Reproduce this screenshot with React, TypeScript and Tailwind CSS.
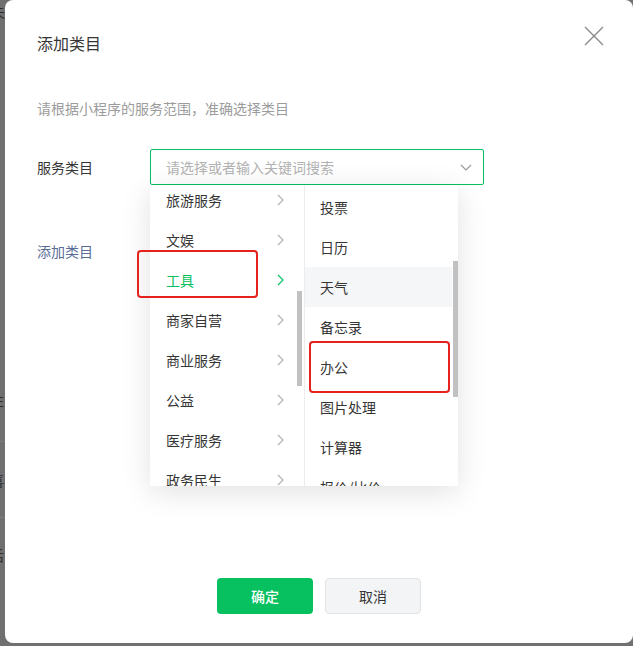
import React from "react";

const font = { fontFamily: '"Noto Sans CJK SC", "Noto Sans", sans-serif' };

function ChevronRight({ color = "#b2b2b2" }: { color?: string }) {
  return (
    <svg width="7" height="12" viewBox="0 0 7 12" fill="none">
      <path d="M1 1l5 5-5 5" stroke={color} strokeWidth="1.2" />
    </svg>
  );
}

const leftItems = ["旅游服务", "文娱", "工具", "商家自营", "商业服务", "公益", "医疗服务", "政务民生"];
const rightItems = ["投票", "日历", "天气", "备忘录", "办公", "图片处理", "计算器", "报价/比价"];

export default function App() {
  return (
    <div className="flex h-[646px] w-[633px] overflow-hidden bg-[#707070]" style={font}>
      <div className="relative w-[5px] shrink-0 overflow-hidden text-[14px] text-[#2e2e2e]">
        <div className="absolute left-[-9px] top-[1px]">失</div>
        <div className="absolute left-[-10px] top-[390px]">左</div>
        <div className="absolute left-[-10px] top-[470px]">喜</div>
        <div className="absolute left-[-10px] top-[545px]">后</div>
        <div className="absolute left-0 top-[441px] h-px w-[5px] bg-[#7d7d7d]" />
        <div className="absolute left-0 top-[517px] h-px w-[5px] bg-[#7d7d7d]" />
      </div>
      <div className="relative flex h-[643px] w-[628px] flex-col rounded-lg bg-white pl-[32px] text-[#353535]">
        <div className="flex items-center justify-between pt-[31px] pr-[29px]">
          <div className="text-[16px] leading-6">添加类目</div>
          <svg width="20" height="20" viewBox="0 0 20 20" className="mt-[-15px]">
            <path d="M1 1L19 19M19 1L1 19" stroke="#8a8a8a" strokeWidth="1.4" />
          </svg>
        </div>
        <div className="mt-[43px] text-[14px] leading-5 text-[#9c9c9c]">
          请根据小程序的服务范围，准确选择类目
        </div>
        <div className="mt-[31px] flex">
          <div className="w-[113px] pt-[8px] text-[14px] leading-5">服务类目</div>
          <div className="relative">
            <div className="flex h-[36px] w-[334px] items-center justify-between rounded-[2px] border border-[#07c160] pl-[15px] pr-[11px] text-[14px] text-[#b2b2b2]">
              <span>请选择或者输入关键词搜索</span>
              <svg width="12" height="7" viewBox="0 0 12 7" fill="none">
                <path d="M1 1l5 5 5-5" stroke="#9a9a9a" strokeWidth="1.2" />
              </svg>
            </div>
            <div className="absolute left-0 top-[36px] z-10 flex h-[301px] w-[308px] overflow-hidden rounded-[2px] bg-white shadow-[0_6px_30px_rgba(0,0,0,0.12)]">
              <div className="relative w-[155px] shrink-0 overflow-hidden border-r border-[#ececec]">
                <div className="mt-[-5px]">
                  {leftItems.map((t) => {
                    const sel = t === "工具";
                    return (
                      <div
                        key={t}
                        className={`flex h-[40px] items-center justify-between pl-[16px] pr-[20px] text-[14px] ${sel ? "text-[#07c160]" : "text-[#353535]"}`}
                      >
                        <span>{t}</span>
                        <ChevronRight color={sel ? "#07c160" : "#b2b2b2"} />
                      </div>
                    );
                  })}
                </div>
                <div className="absolute right-[2px] top-[106px] h-[95px] w-[5px] bg-[#c1c1c1]" />
              </div>
              <div className="relative flex-1 overflow-hidden">
                <div className="mt-[2px]">
                  {rightItems.map((t) => (
                    <div
                      key={t}
                      className={`flex h-[40px] w-[147px] items-center pl-[15px] text-[14px] text-[#353535] ${t === "天气" ? "bg-[#f5f6f7]" : ""}`}
                    >
                      {t}
                    </div>
                  ))}
                </div>
                <div className="absolute right-0 top-[76px] h-[136px] w-[5px] bg-[#c1c1c1]" />
              </div>
            </div>
            <div className="pointer-events-none absolute left-[-13px] top-[101px] z-20 h-[48px] w-[121px] rounded-[4px] border-[2px] border-[#e5221c]" />
            <div className="pointer-events-none absolute left-[159px] top-[192px] z-20 h-[52px] w-[141px] rounded-[4px] border-[2px] border-[#e5221c]" />
          </div>
        </div>
        <div className="mt-[56px] text-[14px] leading-5 text-[#576b95]">添加类目</div>
        <div className="mt-auto mb-[29px] flex justify-center gap-[12px] pr-[32px]">
          <button className="flex h-[36px] w-[96px] items-center justify-center rounded-[4px] bg-[#07c160] text-[14px] font-medium text-white">
            确定
          </button>
          <button className="flex h-[36px] w-[96px] items-center justify-center rounded-[4px] border border-[#e2e2e2] bg-[#f3f4f6] text-[14px] text-[#353535]">
            取消
          </button>
        </div>
      </div>
    </div>
  );
}
